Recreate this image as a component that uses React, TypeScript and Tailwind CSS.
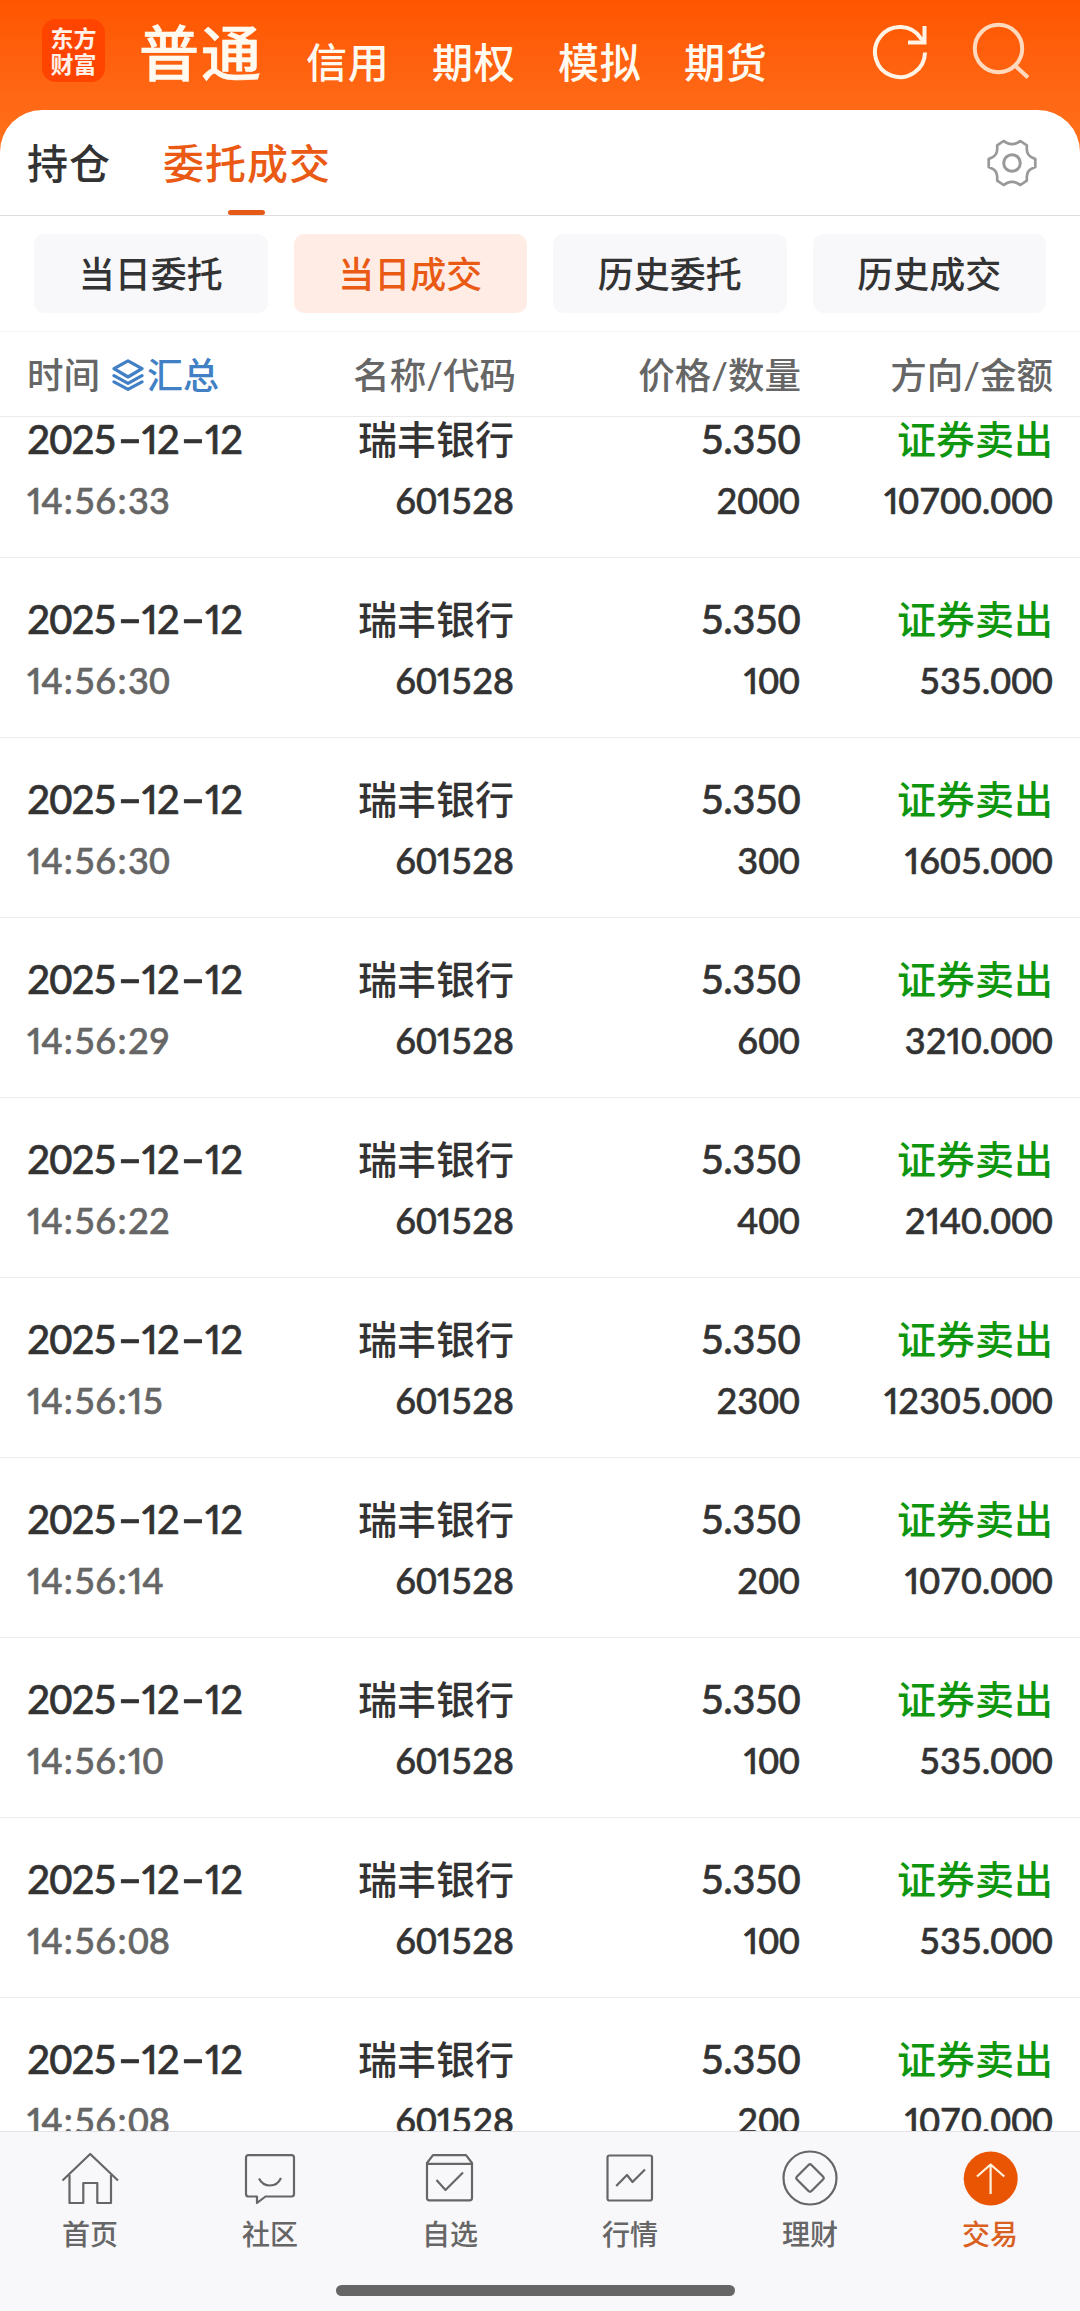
import React from "react";

type Trade = { time: string; qty: string; amount: string };

const trades: Trade[] = [
  { time: "14:56:33", qty: "2000", amount: "10700.000" },
  { time: "14:56:30", qty: "100", amount: "535.000" },
  { time: "14:56:30", qty: "300", amount: "1605.000" },
  { time: "14:56:29", qty: "600", amount: "3210.000" },
  { time: "14:56:22", qty: "400", amount: "2140.000" },
  { time: "14:56:15", qty: "2300", amount: "12305.000" },
  { time: "14:56:14", qty: "200", amount: "1070.000" },
  { time: "14:56:10", qty: "100", amount: "535.000" },
  { time: "14:56:08", qty: "100", amount: "535.000" },
  { time: "14:56:08", qty: "200", amount: "1070.000" },
];

function RefreshIcon() {
  return (
    <svg width="60" height="60" viewBox="0 0 60 60" fill="none" stroke="#fff4e6" strokeWidth="4">
      <path d="M55 31.5A25 25 0 1 1 51 17.5L55 21" />
      <path d="M54.5 5v16.5H38" />
    </svg>
  );
}

function SearchIcon() {
  return (
    <svg width="60" height="60" viewBox="0 0 60 60" fill="none" stroke="#ffd9bd" strokeWidth="4">
      <circle cx="28.5" cy="27.5" r="23.7" />
      <path d="M45 44.5L58 56.5" />
    </svg>
  );
}

function GearIcon() {
  return (
    <svg width="50" height="50" viewBox="0 0 50 50" fill="none" stroke="#999" strokeWidth="2.7" strokeLinejoin="round">
      <path d="M16.6 3L20 5Q25 7.4 30 5L33.4 3L39.8 7.3V11.5Q40.3 17.5 45 19.5L48.3 21V29L45 30.5Q40.3 32.5 39.8 38.5V42.7L33.4 47L30 45Q25 42.6 20 45L16.6 47L10.2 42.7V38.5Q9.7 32.5 5 30.5L1.7 29V21L5 19.5Q9.7 17.5 10.2 11.5V7.3Z" />
      <circle cx="25" cy="25" r="8.3" strokeWidth="3" />
    </svg>
  );
}

function LayersIcon() {
  return (
    <svg width="32" height="32" viewBox="0 0 32 32" fill="none" stroke="#4180c4" strokeWidth="3.2" strokeLinejoin="round" strokeLinecap="round">
      <path d="M16 1.8L30 9.7L16 18L2 9.7Z" />
      <path d="M2 16.6L16 24.4L30 16.6" />
      <path d="M2 22.8L16 30.4L30 22.8" />
    </svg>
  );
}

function NavIcon({ children }: { children: React.ReactNode }) {
  return (
    <svg width="60" height="60" viewBox="0 0 60 60" fill="none" stroke="#666" strokeWidth="2.2" strokeLinejoin="round">
      {children}
    </svg>
  );
}

const navItems: { label: string; active?: boolean; icon: React.ReactNode }[] = [
  {
    label: "首页",
    icon: (
      <>
        <path d="M2.5 32.5L30.2 6L58 32.5" />
        <path d="M9.5 27V55H23.3V35H37.3V55H51V27" />
      </>
    ),
  },
  {
    label: "社区",
    icon: (
      <>
        <path d="M8.5 7.2H51.5Q54 7.2 54 9.7V46Q54 48.5 51.5 48.5H25.5L17 55V48.5H8.5Q6 48.5 6 46V9.7Q6 7.2 8.5 7.2Z" />
        <path d="M19 30.5Q22.5 37.5 30 37.5T41 30" />
      </>
    ),
  },
  {
    label: "自选",
    icon: (
      <>
        <path d="M7 15L13 7.2H46L52 15V50Q52 52.3 49.7 52.3H9.3Q7 52.3 7 50ZM7 15.8H52" />
        <path d="M16.5 32L25.5 42L43 24.5" />
      </>
    ),
  },
  {
    label: "行情",
    icon: (
      <>
        <rect x="7.5" y="7.5" width="44.5" height="45" rx="2" />
        <path d="M16.2 38L27 27L32.5 34L45 21.5" />
      </>
    ),
  },
  {
    label: "理财",
    icon: (
      <>
        <circle cx="30" cy="30" r="26.5" />
        <path d="M28.5 17L17 28.5Q15.5 30 17 31.5L28.5 43Q30 44.5 31.5 43L43 31.5Q44.5 30 43 28.5L31.5 17Q30 15.5 28.5 17Z" />
      </>
    ),
  },
  {
    label: "交易",
    active: true,
    icon: (
      <>
        <circle cx="30.7" cy="30.5" r="27" fill="#ea5504" stroke="none" />
        <path d="M30.6 46V17M17 28.5L30.6 16.5L44.3 28.5" stroke="#fff3e0" />
      </>
    ),
  },
];

/* Fixed-width figures, except for a narrow 1, a wide dash and a spaced colon. */
function Num({ value }: { value: string }) {
  return (
    <span className="[-webkit-text-stroke:0.6px_currentColor]">
      {value.split(/([1:-])/).map((part, i) => {
        if (part === "1") return <span key={i} className="[font-variant-numeric:proportional-nums]">1</span>;
        if (part === ":") return <span key={i} className="inline-block w-[12px] text-center">:</span>;
        if (part === "-") return <span key={i} className="inline-block w-[26px] scale-x-[1.7] text-center">-</span>;
        return part;
      })}
    </span>
  );
}

function TradeRow({ t }: { t: Trade }) {
  return (
    <div className="flex h-[180px] shrink-0 flex-col border-b border-[#ededed] pl-[27px] pr-[27px] pt-[36px] text-[#333]">
      <div className="grid h-[50px] grid-cols-[243px_244px_286px_253px] items-center whitespace-nowrap text-right text-[39px] font-medium leading-[50px]">
        <span className="text-left text-[40px] tracking-[-1px]">
          <Num value="2025-12-12" />
        </span>
        <span>瑞丰银行</span>
        <span className="text-[40px] tracking-[-0.6px]">
          <Num value="5.350" />
        </span>
        <span className="text-[#0f960f]">证券卖出</span>
      </div>
      <div className="mt-[11px] grid h-[50px] grid-cols-[243px_244px_286px_253px] items-center whitespace-nowrap text-right text-[36px] font-medium leading-[50px]">
        <span className="text-left text-[#666]">
          <Num value={t.time} />
        </span>
        <span>
          <Num value="601528" />
        </span>
        <span>
          <Num value={t.qty} />
        </span>
        <span>
          <Num value={t.amount} />
        </span>
      </div>
    </div>
  );
}

export default function App() {
  return (
    <div className="flex h-[2311px] w-[1080px] flex-col overflow-hidden bg-white font-['Lato','Noto_Sans_CJK_SC',sans-serif] [font-variant-numeric:tabular-nums]">
      <div className="h-[152px] shrink-0 bg-linear-to-b from-[#ff5500] to-[#ff711c]">
        <header className="flex h-[110px] items-start pl-[42px] pr-[50px] text-[#fffaf0]">
          <div className="mt-[19px] flex h-[63px] w-[63px] flex-col items-center justify-center rounded-[14px] bg-[#ff4400] text-[23px] font-bold leading-[26px] text-[#fff0e8]">
            <span>东方</span>
            <span>财富</span>
          </div>
          <div className="ml-[34px] mt-[13px] w-[167px] text-[60px] font-medium leading-[80px] tracking-[2px] [-webkit-text-stroke:0.6px_#fffaf0]">普通</div>
          <nav className="mt-[33px] flex text-[41px] font-medium leading-[60px] tracking-[0.8px]">
            <span className="w-[126px]">信用</span>
            <span className="w-[126px]">期权</span>
            <span className="w-[126px]">模拟</span>
            <span>期货</span>
          </nav>
          <div className="ml-auto mt-[21px] flex gap-[40px]">
            <RefreshIcon />
            <SearchIcon />
          </div>
        </header>
      </div>

      <section className="z-10 -mt-[42px] flex h-[106px] shrink-0 items-start rounded-t-[42px] border-b border-[#ddd] bg-white pl-[27px] pr-[43px] text-[41px] font-medium leading-[60px] tracking-[1px]">
        <div className="mt-[24px] w-[136px] text-[#333]">持仓</div>
        <div className="flex h-[105px] flex-col items-center text-[#ea5a14]">
          <span className="mt-[24px]">委托成交</span>
          <span className="mr-[2px] mt-auto h-[5px] w-[37px] rounded-full bg-[#e65a18]" />
        </div>
        <div className="ml-auto mt-[28px]">
          <GearIcon />
        </div>
      </section>

      <section className="grid h-[116px] shrink-0 grid-cols-4 gap-[26px] border-b border-[#f5f5f5] pl-[34px] pr-[34px] pt-[18px] text-center text-[36px] font-medium leading-[80px] text-[#333]">
        <div className="h-[79px] rounded-[10px] bg-[#f8f8fa]">当日委托</div>
        <div className="h-[79px] rounded-[10px] bg-[#ffede5] text-[#ea5a14]">当日成交</div>
        <div className="h-[79px] rounded-[10px] bg-[#f8f8fa]">历史委托</div>
        <div className="h-[79px] rounded-[10px] bg-[#f8f8fa]">历史成交</div>
      </section>

      <section className="grid h-[85px] shrink-0 grid-cols-[243px_246px_285px_252px] items-center whitespace-nowrap border-b border-[#ebebeb] pl-[27px] pr-[27px] pt-[2px] text-right text-[36.5px] font-medium leading-[60px] text-[#666]">
        <div className="flex items-center">
          <span>时间</span>
          <span className="ml-[12px] flex items-center text-[#4180c4]">
            <LayersIcon />
            <span className="ml-[3px] text-[36px]">汇总</span>
          </span>
        </div>
        <span>名称/代码</span>
        <span>价格/数量</span>
        <span>方向/金额</span>
      </section>

      <main className="flex h-[1714px] shrink-0 flex-col overflow-hidden">
        <div className="-mt-[39px]">
          {trades.map((t, i) => (
            <TradeRow key={i} t={t} />
          ))}
        </div>
      </main>

      <footer className="flex h-[180px] shrink-0 flex-col items-center border-t border-[#e2e2e4] bg-[#f8f8fa]">
        <nav className="grid w-full grid-cols-6">
          {navItems.map((n) => (
            <div key={n.label} className="flex flex-col items-center pt-[16px] text-[28px] font-medium leading-[40px]">
              <NavIcon>{n.icon}</NavIcon>
              <span className={n.active ? "mt-[6px] text-[#d9601f]" : "mt-[6px] text-[#666]"}>{n.label}</span>
            </div>
          ))}
        </nav>
        <div className="mr-[9px] mt-[31px] h-[11px] w-[399px] rounded-full bg-[#666]" />
      </footer>
    </div>
  );
}
